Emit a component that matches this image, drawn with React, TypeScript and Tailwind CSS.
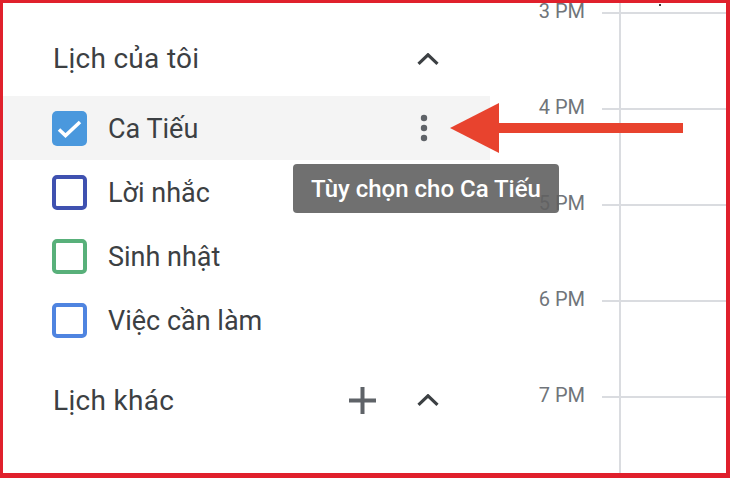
import React from 'react';

type Cal = { name: string; color: string; checked?: boolean };

const calendars: Cal[] = [
  { name: 'Ca Tiếu', color: '#4a98dd', checked: true },
  { name: 'Lời nhắc', color: '#3f51b0' },
  { name: 'Sinh nhật', color: '#58b07a' },
  { name: 'Việc cần làm', color: '#4f84e0' },
];

const hours = ['3 PM', '4 PM', '5 PM', '6 PM', '7 PM'];

function ChevronUp() {
  return (
    <svg width="22" height="12" viewBox="0 0 22 12" fill="none">
      <polyline points="1.5,10.8 11,1.8 20.5,10.8" stroke="#3c4043" strokeWidth="3.2" />
    </svg>
  );
}

function Plus() {
  return (
    <svg width="27" height="27" viewBox="0 0 27 27">
      <rect x="11.5" y="0" width="4" height="27" fill="#5f6368" />
      <rect x="0" y="11.5" width="27" height="4" fill="#5f6368" />
    </svg>
  );
}

function Kebab() {
  return (
    <svg width="8" height="28" viewBox="0 0 8 28">
      <circle cx="4" cy="4" r="3.2" fill="#5f6368" />
      <circle cx="4" cy="14" r="3.2" fill="#5f6368" />
      <circle cx="4" cy="24" r="3.2" fill="#5f6368" />
    </svg>
  );
}

function Checkbox({ color, checked }: { color: string; checked?: boolean }) {
  if (checked) {
    return (
      <div className="w-[35px] h-[35px] rounded-[5px] flex items-center justify-center" style={{ backgroundColor: color }}>
        <svg width="35" height="35" viewBox="0 0 35 35" fill="none">
          <polyline points="7,18.5 13.5,24.5 28,11" stroke="#fff" strokeWidth="3.6" />
        </svg>
      </div>
    );
  }
  return <div className="w-[35px] h-[35px] rounded-[5px] border-[4px]" style={{ borderColor: color }} />;
}

export default function App() {
  return (
    <div
      className="relative w-[730px] h-[478px] overflow-hidden bg-white border-t-[3px] border-l-[3px] border-r-[4px] border-b-[5px] border-[#e0202c] flex"
      style={{ fontFamily: 'Roboto, "Noto Sans", sans-serif' }}
    >
      {/* sidebar */}
      <div className="w-[487px] shrink-0 flex flex-col">
        <div className="mt-[24px] h-[64px] shrink-0 flex items-center pl-[50px]">
          <span className="text-[28px] text-[#3c4043] tracking-[0.3px]">Lịch của tôi</span>
          <div className="ml-auto mr-[38px] w-[48px] flex justify-center">
            <ChevronUp />
          </div>
        </div>

        <div className="mt-[5px] flex flex-col">
          {calendars.map((c) => (
            <div
              key={c.name}
              className={`h-[64px] shrink-0 flex items-center pl-[49px] gap-[21px] ${c.checked ? 'bg-[#f4f4f4]' : ''}`}
            >
              <Checkbox color={c.color} checked={c.checked} />
              <span className="text-[27px] text-[#3c4043] translate-y-[1px]">{c.name}</span>
              {c.checked && (
                <div className="ml-auto mr-[42px] w-[48px] flex justify-center">
                  <Kebab />
                </div>
              )}
            </div>
          ))}
        </div>

        <div className="mt-[16px] h-[64px] shrink-0 flex items-center pl-[50px]">
          <span className="text-[28px] text-[#3c4043] tracking-[0.3px] translate-y-[1px]">Lịch khác</span>
          <div className="ml-auto flex items-center gap-[18px] mr-[38px]">
            <div className="w-[48px] flex justify-center">
              <Plus />
            </div>
            <div className="w-[48px] flex justify-center">
              <ChevronUp />
            </div>
          </div>
        </div>
      </div>

      {/* timeline */}
      <div className="flex-1 flex flex-col">
        <div className="h-[9px] shrink-0 flex">
          <div className="w-[129px]" />
          <div className="flex-1 border-l-2 border-[#dadce0]" />
        </div>
        {hours.map((h) => (
          <div key={h} className="h-[96px] flex shrink-0">
            <div className="w-[112px] pr-[17px] text-right -mt-[13px] leading-[24px] text-[20px] text-[#70757a]">{h}</div>
            <div className="w-[17px] border-t-2 border-[#dadce0]" />
            <div className="flex-1 border-t-2 border-l-2 border-[#dadce0]" />
          </div>
        ))}
      </div>

      {/* tooltip */}
      <div className="absolute left-[290px] top-[161px] h-[49px] px-[18px] flex items-center rounded-[4px] bg-[#616161]/90 text-white text-[24px] font-medium">
        Tùy chọn cho Ca Tiếu
      </div>

      {/* red arrow */}
      <svg className="absolute left-[447px] top-[100px]" width="233" height="50" viewBox="0 0 233 50">
        <polygon points="0,25 49,0 49,50" fill="#e8432e" />
        <rect x="48" y="20" width="185" height="10" fill="#e8432e" />
      </svg>

      <div className="absolute left-[656px] top-[1px] w-[2px] h-[2px] bg-black rounded-full" />
    </div>
  );
}
